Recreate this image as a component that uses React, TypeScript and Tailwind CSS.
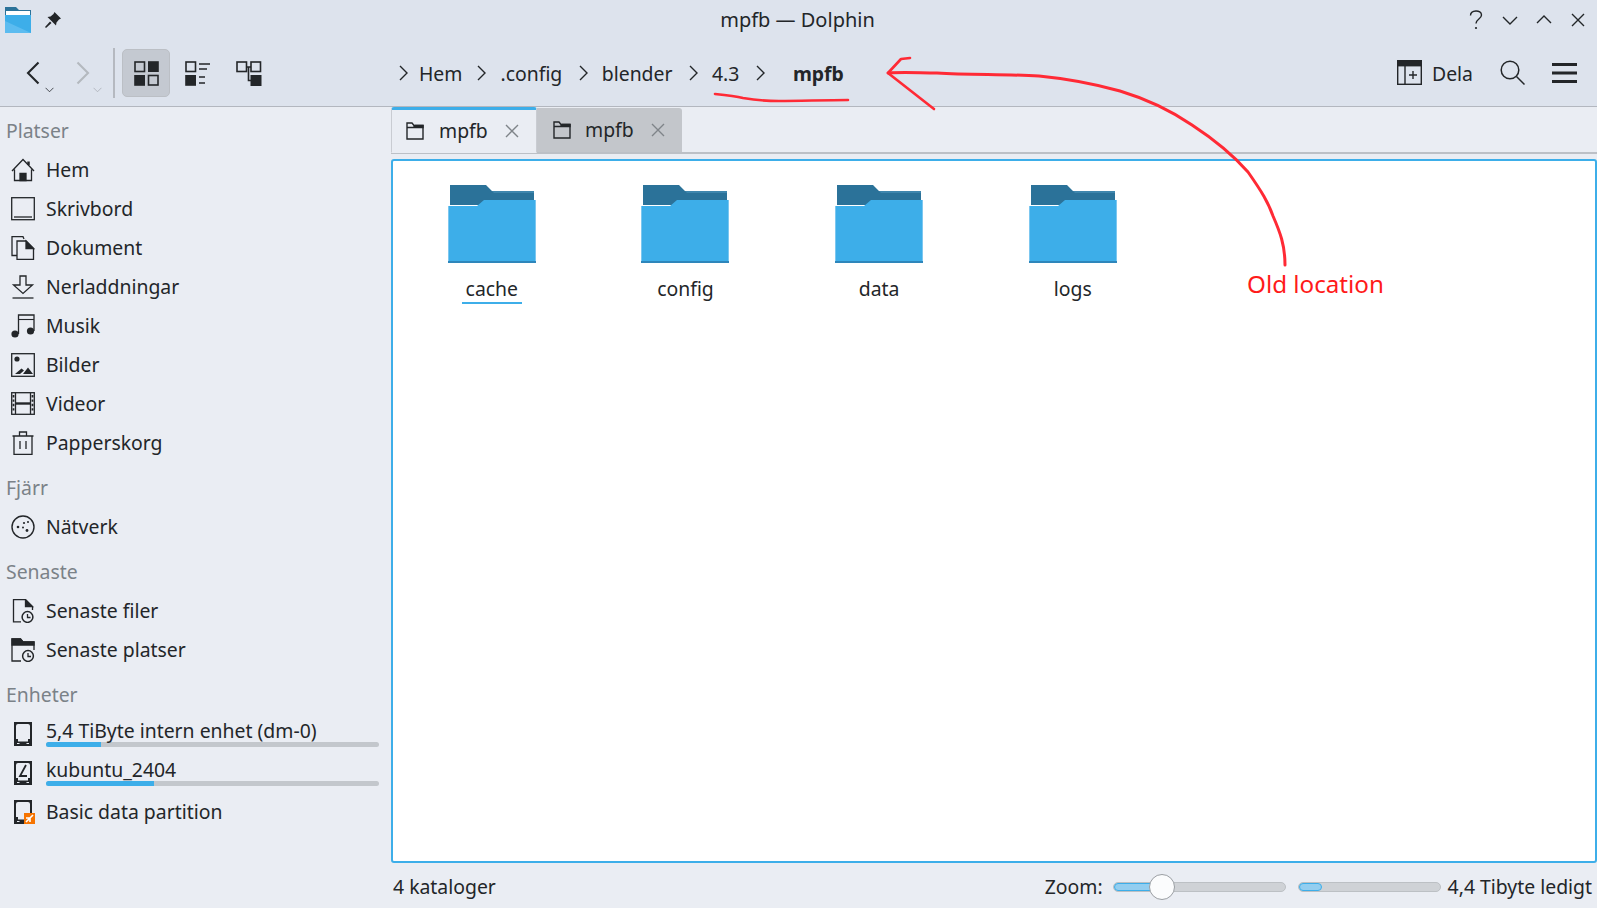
const INK = '#232629'

// ── icons ────────────────────────────────────────────────────────────────────

function Icon({ className = 'w-6 h-6', children }: { className?: string; children: React.ReactNode }) {
  return (
    <svg className={`shrink-0 ${className}`} viewBox="0 0 24 24" fill="none" stroke={INK} strokeWidth="1.3">
      {children}
    </svg>
  )
}

const HomeIcon = () => (
  <Icon>
    <path d="M1 13 12 1.5 23 13M3.5 11.5V22.5H20.5V11.5" />
    <path d="M9 22.5V15.5H15V22.5Z" fill={INK} />
    <path d="M17.5 3.5V7" strokeWidth="2.5" />
  </Icon>
)
const DesktopIcon = () => (
  <Icon>
    <rect x="0.7" y="0.7" width="22.6" height="22" />
    <path d="M3 20H21" />
  </Icon>
)
const DocIcon = () => (
  <Icon>
    <path d="M6 19.5H1V0.7H12L13 3" />
    <path d="M6 23.3V5H15L22.5 12.5V23.3Z" />
    <path d="M15 5 22.5 12.5H15Z" fill={INK} />
  </Icon>
)
const DownloadIcon = () => (
  <Icon>
    <path d="M9 1H15V10H21.5L12 18.5 2.5 10H9Z" />
    <path d="M1.5 23H22.5" />
  </Icon>
)
const MusicIcon = () => (
  <Icon>
    <path d="M7.5 20V1H23V17" />
    <path d="M7.5 5.5H23" strokeWidth="1.1" />
    <circle cx="4" cy="20" r="3.6" fill={INK} stroke="none" />
    <circle cx="19.5" cy="17" r="3.6" fill={INK} stroke="none" />
  </Icon>
)
const PictureIcon = () => (
  <Icon>
    <rect x="0.7" y="0.7" width="22.6" height="22.6" />
    <circle cx="6" cy="6" r="2.6" fill={INK} stroke="none" />
    <path d="M4 21 10.5 15.5 13 17.5 9 21ZM12 21 17 14.5 22 21Z" fill={INK} stroke="none" />
  </Icon>
)
const VideoIcon = () => (
  <Icon>
    <rect x="0.7" y="0.7" width="22.6" height="21.6" />
    <path d="M4.5 1V22M19.5 1V22" />
    <path d="M4.5 11.5H19.5" strokeWidth="2.4" />
    <path d="M2.5 3V20M21.5 3V20" strokeWidth="1.8" strokeDasharray="2.4 2" />
  </Icon>
)
const TrashIcon = () => (
  <Icon>
    <path d="M3 23.3H21V5H3ZM1.5 5H22.5M8.5 4.5V1H15.5V4.5" />
    <path d="M9 10V18M15 10V18" />
  </Icon>
)
const NetworkIcon = () => (
  <Icon>
    <circle cx="12" cy="12" r="11" strokeWidth="1.4" />
    <circle cx="7" cy="12" r="1.3" fill={INK} stroke="none" />
    <circle cx="13" cy="8" r="1.1" fill={INK} stroke="none" />
    <circle cx="17" cy="7" r="1" fill={INK} stroke="none" />
    <circle cx="12" cy="12.5" r="1" fill={INK} stroke="none" />
    <circle cx="16" cy="15.5" r="1.4" fill={INK} stroke="none" />
  </Icon>
)
const RecentFileIcon = () => (
  <Icon>
    <path d="M10 22.8H2.5V0.7H14.5L21.5 7.7V11" />
    <path d="M14.5 0.7 21.5 7.7H14.5Z" fill={INK} />
    <circle cx="16.5" cy="18" r="5.4" strokeWidth="1.5" />
    <path d="M16.5 15V18.5H19.5" />
  </Icon>
)
const RecentFolderIcon = () => (
  <Icon>
    <path d="M10 23H1V1H9.5L12 4H23V12" />
    <path d="M1 1H9.5L12 4H23V7H1Z" fill={INK} />
    <circle cx="17" cy="18" r="5.4" strokeWidth="1.5" />
    <path d="M17 15V18.5H20" />
  </Icon>
)

function DriveIcon({ mark, badge }: { mark?: boolean; badge?: boolean }) {
  return (
    <svg className="w-[24px] h-[24px] shrink-0" viewBox="0 0 24 24" fill="none">
      <rect x="3" y="0" width="18" height="24" fill={INK} />
      <path d="M7 2H17Q19 2 19 4V17H17V19.5H7V17H5V4Q5 2 7 2Z" fill="#eaedf3" />
      <path d="M6 21.5H8.5M15.5 21.5H18" stroke="#eaedf3" strokeWidth="1.2" />
      {mark && <path d="M15 4 9 15H16" stroke={INK} strokeWidth="1.8" />}
      {badge && (
        <>
          <rect x="13" y="13" width="11" height="11" fill="#f67400" />
          <path d="M15 22 22 15M15 18H19V22" stroke="#ffffff" strokeWidth="1.6" />
        </>
      )}
    </svg>
  )
}

function Chevron({ dir, color = INK, className }: { dir: 'l' | 'r' | 'u' | 'd'; color?: string; className: string }) {
  const d = { l: 'M9 1 2 8l7 7', r: 'M3 1l7 7-7 7', u: 'M1 11l7-7 7 7', d: 'M1 5l7 7 7-7' }[dir]
  return (
    <svg className={`shrink-0 ${className}`} viewBox="0 0 16 16" fill="none" stroke={color} strokeWidth="1.4">
      <path d={d} />
    </svg>
  )
}

function TabFolder({ fill = '#eaedf3' }: { fill?: string }) {
  return (
    <svg className="w-[18px] h-[18px] shrink-0" viewBox="0 0 18 18" fill="none" stroke={INK} strokeWidth="1.4">
      <path d="M1 1H6L8 3.5H17V17H1Z" fill={fill} />
      <path d="M1 5.5H7.5L9 3.5H17V5.5Z" fill={INK} />
    </svg>
  )
}

function FolderIcon() {
  return (
    <svg className="w-[88px] h-[78px] block" viewBox="0 0 88 78">
      <path d="M2 0H38L44 6H86V20H2Z" fill="#2b7299" />
      <path d="M44 6H86V8H46Z" fill="#3f86ad" />
      <path d="M0 21H29L36 15H88V78H0Z" fill="#3daee9" />
      <path d="M0 21H1V76H0ZM87 15H88V76H87Z" fill="#7cc7f0" />
      <path d="M0 76H88V78H0Z" fill="#2e86bb" />
    </svg>
  )
}

// ── sidebar ──────────────────────────────────────────────────────────────────

function SectionTitle({ first, children }: { first?: boolean; children: string }) {
  return (
    <div className={`flex items-center pl-[6px] text-[#7b8288] ${first ? 'h-[43px] pt-[5px]' : 'h-[45px] pt-[6px]'}`}>
      {children}
    </div>
  )
}

function Place({ icon, label }: { icon: React.ReactNode; label: string }) {
  return (
    <div className="flex items-center h-[39px] pl-[11px] gap-[11px]">
      {icon}
      <span>{label}</span>
    </div>
  )
}

function Device({ icon, label, used }: { icon: React.ReactNode; label: string; used: string }) {
  return (
    <div className="flex items-center h-[39px] pl-[11px] gap-[11px] pr-[12px]">
      {icon}
      <div className="flex-1 -mt-[1px]">
        <div className="h-[24px] leading-[24px] -mt-[1px]">{label}</div>
        <div className="h-[5px] -mt-[1px] rounded-full bg-[#c3c7cc] overflow-hidden">
          <div className={`h-full bg-[#3daee9] ${used}`} />
        </div>
      </div>
    </div>
  )
}

function Sidebar() {
  return (
    <aside className="w-[391px] shrink-0">
      <SectionTitle first>Platser</SectionTitle>
      <Place icon={<HomeIcon />} label="Hem" />
      <Place icon={<DesktopIcon />} label="Skrivbord" />
      <Place icon={<DocIcon />} label="Dokument" />
      <Place icon={<DownloadIcon />} label="Nerladdningar" />
      <Place icon={<MusicIcon />} label="Musik" />
      <Place icon={<PictureIcon />} label="Bilder" />
      <Place icon={<VideoIcon />} label="Videor" />
      <Place icon={<TrashIcon />} label="Papperskorg" />
      <SectionTitle>Fjärr</SectionTitle>
      <Place icon={<NetworkIcon />} label="Nätverk" />
      <SectionTitle>Senaste</SectionTitle>
      <Place icon={<RecentFileIcon />} label="Senaste filer" />
      <Place icon={<RecentFolderIcon />} label="Senaste platser" />
      <SectionTitle>Enheter</SectionTitle>
      <Device icon={<DriveIcon />} label="5,4 TiByte intern enhet (dm-0)" used="w-[55px]" />
      <Device icon={<DriveIcon mark />} label="kubuntu_2404" used="w-[108px]" />
      <Place icon={<DriveIcon badge />} label="Basic data partition" />
    </aside>
  )
}

// ── header ───────────────────────────────────────────────────────────────────

function TitleBar() {
  return (
    <div className="relative flex items-center justify-center h-[40px]">
      <div className="absolute left-[4px] top-[7px] flex items-center gap-[13px]">
        <svg className="w-[28px] h-[26px]" viewBox="0 0 28 26">
          <path d="M1 0H12L15 3H27V8H1Z" fill="#2b7299" />
          <rect x="2" y="4" width="24" height="4" fill="#ffffff" />
          <path d="M1 8H27V26H1Z" fill="#3daee9" />
          <path d="M1 14 27 26H1Z" fill="#5cbcf0" />
        </svg>
        <svg className="w-[16px] h-[16px]" viewBox="0 0 16 16" fill={INK}>
          <path d="M9.5 0 16 6.5 14 7.5 11.5 10.5 11 13.5 2.5 5 5.5 4.5 8.5 2Z" />
          <path d="M5 9.5 6.5 11 1 16 0 15Z" />
        </svg>
      </div>
      <span className="text-[20px] -ml-[2px]">mpfb — Dolphin</span>
      <div className="absolute right-[11px] top-0 h-[40px] flex items-center gap-[18px]">
        <svg className="w-[16px] h-[20px]" viewBox="0 0 16 20" fill="none" stroke={INK} strokeWidth="1.4">
          <path d="M2.5 5.5C2.5 -0.5 13.5 -0.5 13.5 5C13.5 9 8 9 8 13.5" />
          <circle cx="8" cy="18" r="1.1" fill={INK} stroke="none" />
        </svg>
        <Chevron dir="d" className="w-[16px] h-[16px]" />
        <Chevron dir="u" className="w-[16px] h-[16px]" />
        <svg className="w-[16px] h-[16px]" viewBox="0 0 16 16" fill="none" stroke={INK} strokeWidth="1.4">
          <path d="M2 2 14 14M14 2 2 14" />
        </svg>
      </div>
    </div>
  )
}

function Crumb({ label, bold, first }: { label: string; bold?: boolean; first?: boolean }) {
  return (
    <div className={`flex items-center ${first ? 'gap-[6px] mr-[13px]' : 'gap-[9px] mr-[14.5px]'}`}>
      <Chevron dir="r" className="w-[16px] h-[16px]" />
      <span className={`pt-[2px] ${bold ? 'font-bold ml-[14px]' : ''}`}>{label}</span>
    </div>
  )
}

function Toolbar() {
  return (
    <div className="flex items-center h-[67px] border-b border-[#b3b7bf]">
      <div className="flex items-center w-[397px] shrink-0 pl-[25px]">
        <Chevron dir="l" className="w-[24px] h-[24px]" />
        <Chevron dir="d" className="w-[9px] h-[9px] mt-[32px] -ml-[4px]" />
        <Chevron dir="r" color="#b4b9bf" className="w-[24px] h-[24px] ml-[19px]" />
        <Chevron dir="d" color="#a9aeb5" className="w-[9px] h-[9px] mt-[32px] -ml-[4px]" />
        <div className="w-[2px] h-[50px] bg-[#b5b9c0] ml-[11px]" />
        <div className="flex items-center justify-center w-[48px] h-[48px] ml-[7px] rounded-[5px] bg-[#c4c9d1] border border-[#bbbfc5]">
          <svg className="w-[25px] h-[25px]" viewBox="0 0 25 25" fill="none" stroke={INK} strokeWidth="1.6">
            <rect x="1" y="1" width="9.5" height="9.5" />
            <rect x="14" y="0.2" width="10.8" height="10.8" fill={INK} stroke="none" />
            <rect x="0.2" y="14" width="10.8" height="10.8" fill={INK} stroke="none" />
            <rect x="14.5" y="14.5" width="9.5" height="9.5" />
          </svg>
        </div>
        <svg className="w-[25px] h-[25px] ml-[15px]" viewBox="0 0 25 25" fill="none" stroke={INK} strokeWidth="1.6">
          <rect x="1" y="1" width="9.5" height="9.5" />
          <rect x="0.2" y="14" width="10.8" height="10.8" fill={INK} stroke="none" />
          <path d="M14 3H25M14 8H22M14 16H20M14 22H20" />
        </svg>
        <svg className="w-[26px] h-[25px] ml-[26px]" viewBox="0 0 26 25" fill="none" stroke={INK} strokeWidth="1.6">
          <rect x="1" y="1" width="9.5" height="9.5" />
          <rect x="15" y="1" width="9.5" height="9.5" />
          <rect x="14.5" y="14" width="11" height="11" fill={INK} stroke="none" />
          <path d="M10.5 6H15M12.5 6V19.5H15" />
        </svg>
      </div>
      <div className="flex items-center flex-1">
        <Crumb label="Hem" first />
        <Crumb label=".config" />
        <Crumb label="blender" />
        <Crumb label="4.3" />
        <Crumb label="mpfb" bold />
      </div>
      <div className="flex items-center pr-[20px]">
        <svg className="w-[25px] h-[25px]" viewBox="0 0 25 25" fill="none" stroke={INK} strokeWidth="1.4">
          <rect x="0.7" y="0.7" width="23.6" height="23.6" />
          <rect x="0.7" y="0.7" width="23.6" height="5" fill={INK} />
          <path d="M8 6V24M12 15H20M16 11V19" />
        </svg>
        <span className="ml-[10px] pt-[2px]">Dela</span>
        <svg className="w-[25px] h-[25px] ml-[27px]" viewBox="0 0 25 25" fill="none" stroke={INK} strokeWidth="1.5">
          <circle cx="10" cy="10" r="8.8" />
          <path d="M16.5 16.5 24.5 24.5" />
        </svg>
        <svg className="w-[25px] h-[20px] ml-[27px]" viewBox="0 0 25 20" fill={INK}>
          <rect y="0" width="25" height="3" />
          <rect y="8.5" width="25" height="3" />
          <rect y="17" width="25" height="3" />
        </svg>
      </div>
    </div>
  )
}

// ── main area ────────────────────────────────────────────────────────────────

function Tab({ active }: { active?: boolean }) {
  return (
    <div
      className={`flex items-center ${
        active
          ? 'w-[146px] pl-[14px] h-[46px] border-t-[3px] border-t-[#3daee9] border-x border-x-[#c9ccd2] border-b border-b-[#eaedf3] rounded-t-[3px] -mb-[1px]'
          : 'w-[145px] pl-[16px] h-[44px] bg-[#c3c6cb] rounded-tr-[3px]'
      }`}
    >
      <TabFolder fill={active ? '#eaedf3' : '#c3c6cb'} />
      <span className={active ? 'ml-[15px]' : 'ml-[14px]'}>mpfb</span>
      <svg className="w-[14px] h-[14px] ml-[17px]" viewBox="0 0 14 14" fill="none" stroke="#7f8489" strokeWidth="1.4">
        <path d="M1 1 13 13M13 1 1 13" />
      </svg>
    </div>
  )
}

function FolderCell({ name, current }: { name: string; current?: boolean }) {
  return (
    <div className="flex flex-col items-center w-[193.67px]">
      <FolderIcon />
      <span className={`mt-[12px] leading-[27px] border-b-2 px-[4px] ${current ? 'border-[#3daee9]' : 'border-transparent'}`}>
        {name}
      </span>
    </div>
  )
}

function Annotation() {
  return (
    <>
      <svg className="absolute left-0 top-0 w-[1597px] h-[908px] pointer-events-none" viewBox="0 0 1597 908" fill="none" stroke="#ff2a35" strokeWidth="2.6" strokeLinecap="round" strokeLinejoin="round">
        <path d="M910 58 901 59 888 73 934 109" />
        <path d="M888 73C905 72 920 73 937 73C970 75 1005 74 1039 76C1070 79 1095 84 1120 91C1150 100 1170 110 1192 125C1215 140 1233 155 1248 172C1262 192 1268 202 1273 216C1280 232 1285 245 1285 265" strokeWidth="3" />
        <path d="M715 94C725 95 735 96 743 98C755 100 768 101 779 101C800 101 825 100 848 100" />
      </svg>
      <span className="absolute left-[1247px] top-[267px] text-[24.2px] leading-[34px] text-[#ff1a1a]">Old location</span>
    </>
  )
}

export default function App() {
  return (
    <div
      className="relative flex flex-col w-[1597px] h-[908px] overflow-hidden bg-[#eaedf3] text-[19.4px] text-[#232629]"
      style={{ fontFamily: '"Noto Sans", sans-serif' }}
    >
      <header className="bg-[#dde3ed] shrink-0">
        <TitleBar />
        <Toolbar />
      </header>
      <div className="flex flex-1 min-h-0">
        <Sidebar />
        <main className="flex flex-col flex-1 min-w-0">
          <div className="flex items-end h-[46px] border-b-2 border-[#bcc0c6] mt-[1px]">
            <Tab active />
            <Tab />
          </div>
          <div className="flex items-start h-[704px] mt-[5px] pt-[24px] pl-[2px] bg-white border-2 border-[#3daee9] rounded-[3px]">
            <FolderCell name="cache" current />
            <FolderCell name="config" />
            <FolderCell name="data" />
            <FolderCell name="logs" />
          </div>
          <footer className="flex items-center flex-1 pl-[2px] pr-[5px] pt-[2px]">
            <span>4 kataloger</span>
            <span className="ml-auto">Zoom:</span>
            <div className="relative w-[173px] h-[10px] ml-[10px] rounded-full bg-[#cfd2d6] border border-[#bcc0c4]">
              <div className="w-[48px] h-full rounded-l-full bg-[#93cef0] border border-[#3daee9]" />
              <div className="absolute left-[35px] -top-[9px] w-[26px] h-[26px] rounded-full bg-[#fbfcfd] border border-[#9a9ea3]" />
            </div>
            <div className="w-[143px] h-[10px] ml-[12px] rounded-full bg-[#cfd2d6] border border-[#bcc0c4]">
              <div className="w-[23px] h-full rounded-full bg-[#93cef0] border border-[#3daee9]" />
            </div>
            <span className="ml-[7px]">4,4 Tibyte ledigt</span>
          </footer>
        </main>
      </div>
      <Annotation />
    </div>
  )
}
